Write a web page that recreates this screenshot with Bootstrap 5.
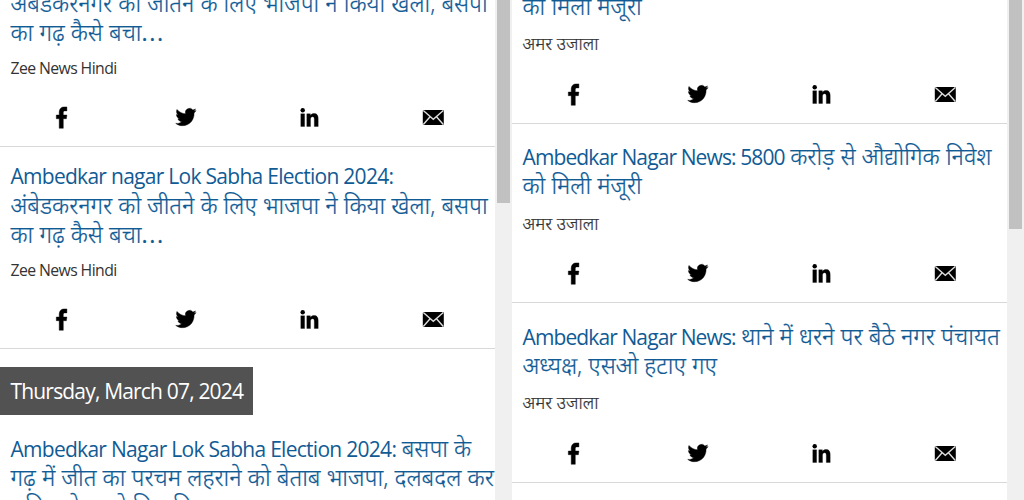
<!DOCTYPE html>
<html lang="hi">
<head>
<meta charset="utf-8">
<meta name="viewport" content="width=device-width, initial-scale=1">
<title>Ambedkar Nagar News</title>
<link href="https://cdn.jsdelivr.net/npm/bootstrap@5.3.0/dist/css/bootstrap.min.css" rel="stylesheet">
<style>
body{font-family:"Open Sans","Noto Sans Devanagari","Noto Sans",sans-serif;background:#fff}
.pane{width:512px;height:500px}
.feed{width:495px}
.feed-left{margin-top:-55px}
.feed-right{margin-top:-55.6px}
.track{width:17px;background:#f0f0f0;padding:0 2px}
.thumb{background:#c1c1c1}
.thumb-left{height:203px}
.thumb-right{height:229px}
.story{border-bottom:1px solid #d8d8d8;padding:18.5px 0 0 10.5px;height:179.5px}
.story-tall{height:202px;padding-top:15px}
.story-last{padding-top:19px}
.headline{font-size:21px;line-height:29px;color:#115b95;white-space:nowrap;font-weight:400}
.headline>div{height:29px}
.en{letter-spacing:-.72px}
.feed-right .en{letter-spacing:-.89px}
.source{font-size:15.8px;line-height:20px;height:20px;color:#333;white-space:nowrap;margin-top:12.5px}
.story-tall .source{margin-top:11px;letter-spacing:-.6px}
.share{margin:27.500px 0 0 -10.500px;height:26px}
.story-tall .share{margin-top:26px}
.share svg{width:495px;height:26px;display:block}
.datebar{width:253px;height:48px;margin-top:18px;background:#525252;color:#fff;font-size:21px;letter-spacing:-.82px;line-height:48px;padding-left:10.5px;white-space:nowrap}
.hi{font-weight:300;font-size:23.5px;-webkit-text-stroke:.2px currentColor}
.hi-wide{font-size:23.6px}
.source .hi{font-size:17.8px}
.dots{letter-spacing:1.6px;font-weight:400}
</style>
</head>
<body class="overflow-hidden">
<svg class="d-none">
<symbol id="fb" viewBox="0 0 26 26"><path d="M10.700 24.300V14.700H7.800V11h2.900V8.300c0-3.400 1.900-5.400 5-5.400h2.700v4h-1.800c-1.400 0-1.800.6-1.800 1.800V11h3.600l-.5 3.700h-3.100v9.600z" stroke="#000" stroke-width=".4"/></symbol>
<symbol id="tw" viewBox="0 0 26 26"><path d="M23.500 5.700c-.7.400-1.500.6-2.400.7.900-.5 1.500-1.300 1.800-2.300-.8.500-1.700.8-2.600 1A4.200 4.200 0 0 0 13 9c-3.500-.2-6.500-1.800-8.600-4.400-1 1.900-.5 4.300 1.300 5.600-.7 0-1.300-.2-1.900-.5 0 2 1.400 3.800 3.400 4.200-.6.200-1.300.2-1.900.1.500 1.700 2.100 2.900 3.900 2.900-1.700 1.400-3.900 2-6.100 1.700 2 1.500 4.300 2.300 6.800 2.300 7.700 0 11.900-6.500 11.600-12.700.8-.7 1.500-1.500 2-2.500z" transform="translate(.1 .8)" stroke="#000" stroke-width=".4"/></symbol>
<symbol id="li" viewBox="0 0 26 26"><circle cx="6.500" cy="6.300" r="2.200"/><path d="M4.600 9.800h3.800v12.700H4.600zM10.600 9.800h3.600v1.700c.9-1.400 2-2 3.600-2 3.200 0 4.200 2 4.200 5.300v7.700h-3.900v-6.900c0-1.800-.3-2.900-1.700-2.900-1.500 0-2.100 1.100-2.100 2.900v6.900h-3.700z" stroke="#000" stroke-width=".3"/></symbol>
<symbol id="ml" viewBox="0 0 26 26"><rect x="2.800" y="6" width="21" height="15" rx="1"/><path d="M3.300 6.500l10 8.700L23.300 6.500M3.300 20.500l7-8M23.300 20.500l-7-8" fill="none" stroke="#ddd" stroke-width="1.400"/></symbol>
<symbol id="icons" viewBox="0 0 495 26"><use href="#fb" x="48.500" width="26" height="26"/><use href="#tw" x="172.500" width="26" height="26"/><use href="#li" x="296.200" width="26" height="26"/><use href="#ml" x="420" width="26" height="26"/></symbol>
</svg>
<main class="d-flex">
<section class="pane d-flex overflow-hidden">
<div class="feed feed-left flex-shrink-0">
<article class="story story-tall"><div class="headline"><div><span class="en">Ambedkar nagar Lok Sabha Election 2024:</span></div><div><span class="hi">अंबेडकरनगर को जीतने के लिए भाजपा ने किया खेला, बसपा</span></div><div><span class="hi">का गढ़ कैसे बचा<span class="dots">...</span></span></div></div><div class="source">Zee News Hindi</div><div class="share"><svg><use href="#icons"/></svg></div></article>
<article class="story story-tall"><div class="headline"><div><span class="en">Ambedkar nagar Lok Sabha Election 2024:</span></div><div><span class="hi">अंबेडकरनगर को जीतने के लिए भाजपा ने किया खेला, बसपा</span></div><div><span class="hi">का गढ़ कैसे बचा<span class="dots">...</span></span></div></div><div class="source">Zee News Hindi</div><div class="share"><svg><use href="#icons"/></svg></div></article>
<div class="datebar"><span>Thursday, March 07, 2024</span></div>
<article class="story story-tall story-last"><div class="headline"><div><span class="en">Ambedkar Nagar Lok Sabha Election 2024:</span> <span class="hi">बसपा के</span></div><div><span class="hi hi-wide">गढ़ में जीत का परचम लहराने को बेताब भाजपा, दलबदल कर</span></div><div><span class="hi">सक्रिय नेता को मिल किया</span></div></div></article>
</div><div class="track"><div class="thumb thumb-left"></div></div>
</section>
<section class="pane d-flex overflow-hidden">
<div class="feed feed-right flex-shrink-0">
<article class="story"><div class="headline"><div><span class="en">Ambedkar Nagar News: 5800</span> <span class="hi hi-wide">करोड़ से औद्योगिक निवेश</span></div><div><span class="hi">को मिली मंजूरी</span></div></div><div class="source"><span class="hi">अमर उजाला</span></div><div class="share"><svg><use href="#icons"/></svg></div></article>
<article class="story"><div class="headline"><div><span class="en">Ambedkar Nagar News: 5800</span> <span class="hi hi-wide">करोड़ से औद्योगिक निवेश</span></div><div><span class="hi">को मिली मंजूरी</span></div></div><div class="source"><span class="hi">अमर उजाला</span></div><div class="share"><svg><use href="#icons"/></svg></div></article>
<article class="story"><div class="headline"><div><span class="en">Ambedkar Nagar News:</span> <span class="hi hi-wide">थाने में धरने पर बैठे नगर पंचायत</span></div><div><span class="hi">अध्यक्ष, एसओ हटाए गए</span></div></div><div class="source"><span class="hi">अमर उजाला</span></div><div class="share"><svg><use href="#icons"/></svg></div></article>
</div><div class="track"><div class="thumb thumb-right"></div></div>
</section>
</main>
<script src="https://cdn.jsdelivr.net/npm/bootstrap@5.3.0/dist/js/bootstrap.bundle.min.js"></script>
</body>
</html>
